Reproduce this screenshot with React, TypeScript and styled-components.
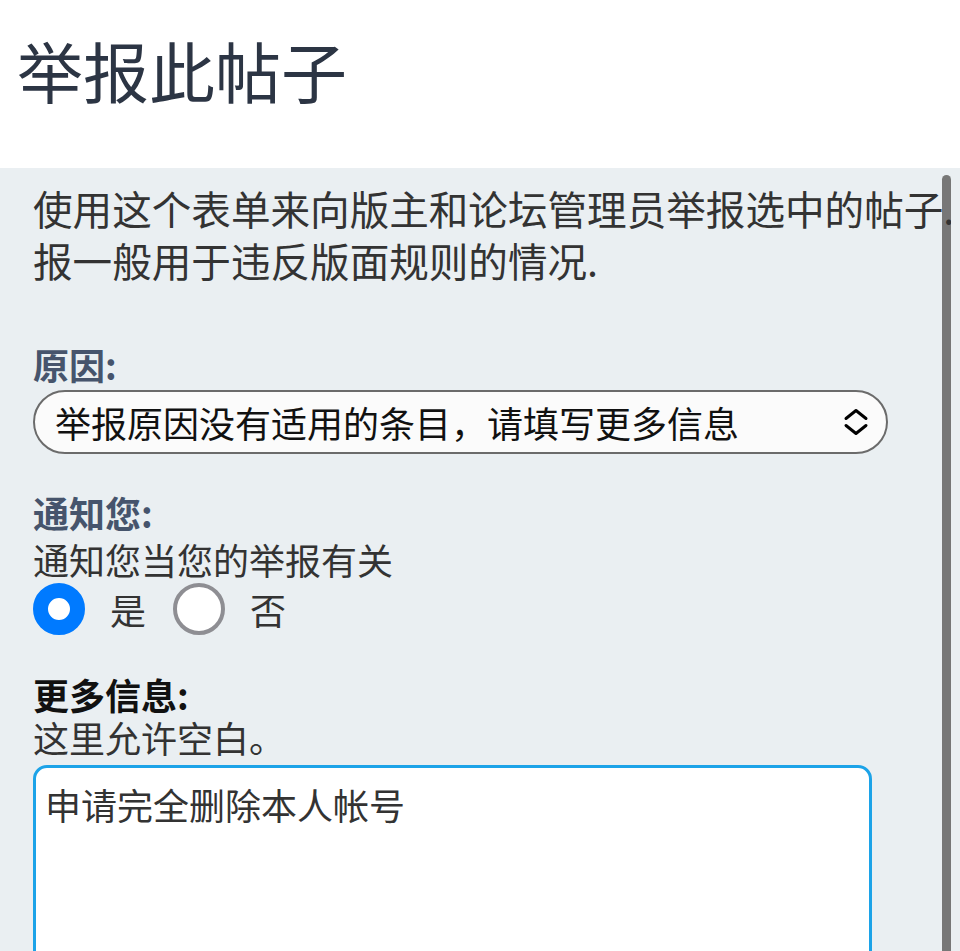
import React from "react";
import styled, { createGlobalStyle } from "styled-components";

const GlobalStyle = createGlobalStyle`
  html, body {
    margin: 0;
    padding: 0;
    background: #ffffff;
    overflow: hidden;
  }
  body {
    font-family: "Noto Sans CJK SC", "Noto Sans", sans-serif;
  }
`;

const Page = styled.div`
  width: 960px;
  height: 951px;
  overflow: hidden;
  display: flex;
  flex-direction: column;
`;

const Header = styled.header`
  height: 168px;
  box-sizing: border-box;
  padding: 29px 0 0 17px;
  background: #ffffff;
  flex-shrink: 0;
`;

const Title = styled.h1`
  margin: 0;
  font-size: 66px;
  line-height: 80px;
  font-weight: 400;
  color: #2c3544;
`;

const Panel = styled.main`
  position: relative;
  flex: 1;
  background: #eaeff2;
  overflow: hidden;
  padding: 14px 0 0 33px;
`;

const Scrollbar = styled.div`
  position: absolute;
  top: 7px;
  bottom: 0;
  right: 9px;
  width: 9px;
  background: #777777;
  border-radius: 5px 5px 0 0;
`;

const Content = styled.div`
  position: relative;
  width: 918px;
  overflow: hidden;
`;

const Description = styled.p`
  margin: 0;
  width: 985px;
  font-size: 39.6px;
  line-height: 52px;
  color: #333333;
`;

const Field = styled.section<{ $gap: number }>`
  margin-top: ${(p) => p.$gap}px;
  display: flex;
  flex-direction: column;
  align-items: flex-start;
`;

const Label = styled.div<{ $dark?: boolean; $lh: number }>`
  font-size: 36px;
  line-height: ${(p) => p.$lh}px;
  font-weight: 700;
  color: ${(p) => (p.$dark ? "#111111" : "#46546c")};
`;

const Hint = styled.div<{ $lh: number }>`
  font-size: 36px;
  line-height: ${(p) => p.$lh}px;
  color: #333333;
`;

const SelectBox = styled.div`
  margin-top: 4px;
  width: 855px;
  height: 64px;
  box-sizing: border-box;
  border: 2px solid #6b6b6b;
  border-radius: 32px;
  background: #fbfbfb;
  display: flex;
  align-items: center;
  justify-content: space-between;
  padding: 0 17px 0 20px;
`;

const SelectText = styled.span`
  font-size: 36px;
  line-height: 44px;
  color: #111111;
`;

const RadioRow = styled.div`
  display: flex;
  align-items: center;
  height: 52px;
`;

const RadioCircle = styled.span<{ $checked?: boolean }>`
  width: 52px;
  height: 52px;
  box-sizing: border-box;
  border-radius: 50%;
  flex-shrink: 0;
  background: #ffffff;
  border: ${(p) => (p.$checked ? "15px solid #007aff" : "4px solid #8e8e93")};
`;

const RadioText = styled.span<{ $after: number }>`
  margin-left: 25px;
  margin-right: ${(p) => p.$after}px;
  font-size: 36px;
  line-height: 44px;
  color: #333333;
`;

const TextArea = styled.textarea`
  margin-top: 6px;
  width: 839px;
  height: 320px;
  box-sizing: border-box;
  border: 3px solid #1ca3e8;
  border-radius: 14px;
  background: #ffffff;
  padding: 15px 9px;
  font-family: "Noto Sans CJK SC", "Noto Sans", sans-serif;
  font-size: 36px;
  line-height: 43px;
  color: #333333;
  resize: none;
  outline: none;
`;

const Chevron = () => (
  <svg width="26" height="28" viewBox="0 0 26 28" fill="none">
    <path
      d="M3 10.5 L13 2.5 L23 10.5"
      stroke="#000"
      strokeWidth="3"
      strokeLinecap="round"
      strokeLinejoin="round"
    />
    <path
      d="M3 17.5 L13 25.5 L23 17.5"
      stroke="#000"
      strokeWidth="3"
      strokeLinecap="round"
      strokeLinejoin="round"
    />
  </svg>
);

export default function App() {
  return (
    <>
      <GlobalStyle />
      <Page>
        <Header>
          <Title>举报此帖子</Title>
        </Header>
        <Panel>
          <Scrollbar />
          <Content>
            <Description>
              使用这个表单来向版主和论坛管理员举报选中的帖子.举报一般用于违反版面规则的情况.
            </Description>

            <Field $gap={56}>
              <Label $lh={44}>原因:</Label>
              <SelectBox>
                <SelectText>举报原因没有适用的条目，请填写更多信息</SelectText>
                <Chevron />
              </SelectBox>
            </Field>

            <Field $gap={35}>
              <Label $lh={47}>通知您:</Label>
              <Hint $lh={47}>通知您当您的举报有关</Hint>
              <RadioRow>
                <RadioCircle $checked />
                <RadioText $after={27}>是</RadioText>
                <RadioCircle />
                <RadioText $after={0}>否</RadioText>
              </RadioRow>
            </Field>

            <Field $gap={38}>
              <Label $lh={43} $dark>
                更多信息:
              </Label>
              <Hint $lh={43}>这里允许空白。</Hint>
              <TextArea defaultValue="申请完全删除本人帐号" />
            </Field>
          </Content>
        </Panel>
      </Page>
    </>
  );
}
